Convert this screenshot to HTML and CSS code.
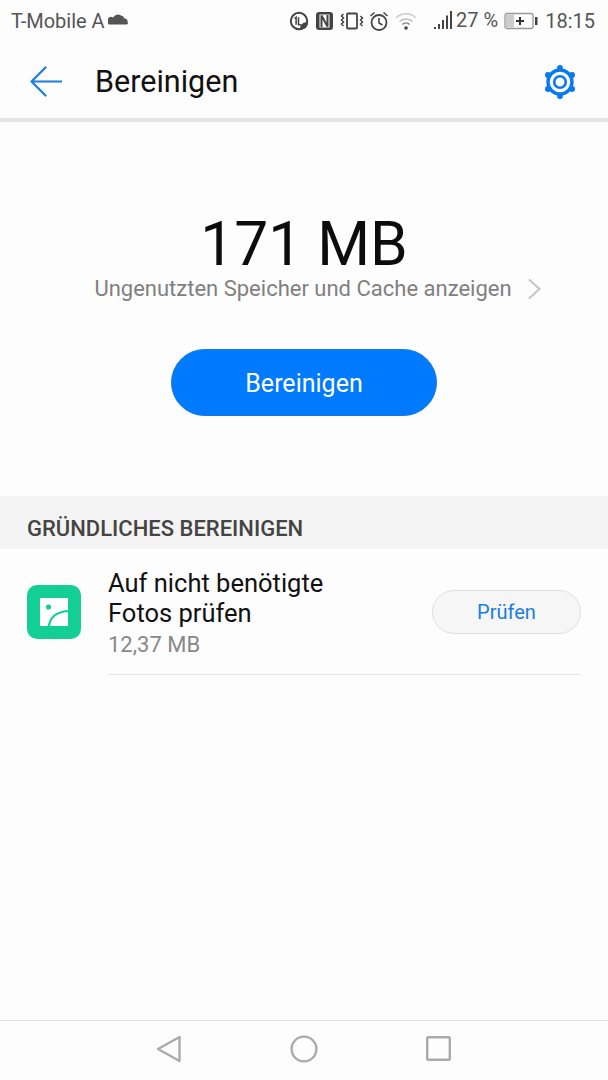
FILE: index.html
```html
<!DOCTYPE html>
<html lang="de">
<head>
    <meta charset="UTF-8">
    <meta name="viewport" content="width=device-width, initial-scale=1.0">
    <title>Bereinigen</title>
    <link rel="stylesheet" href="styles.css">
</head>
<body>
    <div class="screen">
        <div class="status-bar">
            <div class="status-left">
                <span>T-Mobile A</span>
                <svg class="cloud" width="20" height="12" viewBox="0 0 20 12"><path d="M1 11.500h17.500a1.500 1.500 0 0 0 1-2.600 3 3 0 0 0-3-3.300A4.500 4.500 0 0 0 13 2.600 5 5 0 0 0 5.200 4.600 3.600 3.600 0 0 0 1 11.500z" fill="#555"/></svg>
            </div>
            <div class="status-right">
                <svg width="20" height="20" viewBox="0 0 20 20" class="st-data"><circle cx="10" cy="10" r="8.200" fill="none" stroke="#444" stroke-width="2"/><path d="M5.500 7.500l1.600-1.200v7.400M9.500 6.300v7.400h3" fill="none" stroke="#444" stroke-width="1.500"/><path d="M11 18.500c0-5 3-7.500 8-7.500 0 5-3 7.500-8 7.500z" fill="#444"/></svg>
                <svg width="19" height="20" viewBox="0 0 19 20" class="st-nfc"><rect x="1" y="1" width="17" height="18" rx="3" fill="#444"/><rect x="4.500" y="3.500" width="10" height="13" fill="#fdfdfd"/><path d="M6.500 16V4.500l6 11V4" fill="none" stroke="#444" stroke-width="2"/></svg>
                <svg width="24" height="20" viewBox="0 0 24 20" class="st-vib"><rect x="7" y="2.500" width="10" height="15" rx="1" fill="none" stroke="#444" stroke-width="1.800"/><path d="M3.500 3l-2 2 2 2-2 2 2 2-2 2 2 2M20.500 5l2 2-2 2 2 2-2 2 2 2" fill="none" stroke="#444" stroke-width="1.500"/></svg>
                <svg width="20" height="21" viewBox="0 0 20 21" class="st-alarm"><circle cx="10" cy="11.500" r="7.500" fill="none" stroke="#444" stroke-width="1.800"/><path d="M10 7v5l3.500 2M1.500 5l4-3.500M18.500 5l-4-3.500" fill="none" stroke="#444" stroke-width="1.600"/></svg>
                <svg width="22" height="18" viewBox="0 0 22 18" class="st-wifi"><path d="M1 6a14 14 0 0 1 20 0" fill="none" stroke="#ccc" stroke-width="1.500"/><path d="M4.500 9.500a9.500 9.500 0 0 1 13 0" fill="none" stroke="#bbb" stroke-width="1.500"/><path d="M7.500 12.500a5 5 0 0 1 7 0" fill="none" stroke="#777" stroke-width="1.500"/><circle cx="11" cy="16" r="1.800" fill="#444"/></svg>
                <svg width="20" height="20" viewBox="0 0 20 20" class="st-signal"><path d="M1 17h2v2H1zM5 14h2v5H5zM9 10h2v9H9zM13 5.500h2V19h-2zM17 1h2v18h-2z" fill="#444"/></svg>
                <span class="st-percent">27 %</span>
                <svg width="34" height="18" viewBox="0 0 34 18" class="st-battery"><rect x="1" y="1.500" width="28" height="15" rx="2" fill="none" stroke="#999" stroke-width="1.300"/><rect x="2" y="2.500" width="8" height="13" fill="#ccc"/><path d="M16 5v8M12 9h8" stroke="#333" stroke-width="2"/><rect x="31" y="5" width="2.500" height="8" fill="#444"/></svg>
                <span class="st-time">18:15</span>
            </div>
        </div>

        <div class="header">
            <svg class="back" width="32" height="32" viewBox="0 0 32 32"><path d="M15.500 1.500L1.500 15.500l14 14M1.500 15.500h30" fill="none" stroke="#1a7de0" stroke-width="2.200" stroke-linecap="round" stroke-linejoin="round"/></svg>
            <h1>Bereinigen</h1>
            <svg class="gear" width="34" height="34" viewBox="0 0 34 34">
                <g fill="#0a78ee">
                    <circle cx="17" cy="3" r="2.900"/><circle cx="17" cy="31" r="2.900"/>
                    <circle cx="4.900" cy="10" r="2.900"/><circle cx="29.100" cy="10" r="2.900"/>
                    <circle cx="4.900" cy="24" r="2.900"/><circle cx="29.100" cy="24" r="2.900"/>
                </g>
                <circle cx="17" cy="17" r="12" fill="#fdfdfd" stroke="#0a78ee" stroke-width="3.400"/>
                <circle cx="17" cy="17" r="5.800" fill="none" stroke="#0a78ee" stroke-width="2.600"/>
            </svg>
        </div>

        <div class="summary">
            <div class="size">171 MB</div>
            <div class="details">
                <span>Ungenutzten Speicher und Cache anzeigen</span>
                <svg width="14" height="22" viewBox="0 0 14 22"><path d="M2 1.500l10.500 9.500L2 20.500" fill="none" stroke="#c4c4c4" stroke-width="2"/></svg>
            </div>
            <button class="clean-btn">Bereinigen</button>
        </div>

        <div class="section-title">GRÜNDLICHES BEREINIGEN</div>

        <div class="row">
            <div class="row-icon">
                <svg width="28" height="28" viewBox="0 0 28 28">
                    <rect width="28" height="28" fill="#fff"/>
                    <circle cx="8.500" cy="9" r="2.600" fill="#14cf95"/>
                    <path d="M9 28C10 19 17 14 28 13" fill="none" stroke="#14cf95" stroke-width="2.200"/>
                </svg>
            </div>
            <div class="row-body">
                <div class="row-text">
                    <div class="row-title">Auf nicht benötigte<br>Fotos prüfen</div>
                    <div class="row-size">12,37 MB</div>
                </div>
                <button class="check-btn">Prüfen</button>
            </div>
        </div>

        <div class="spacer"></div>

        <div class="nav-bar">
            <svg width="26" height="28" viewBox="0 0 26 28"><path d="M23.500 2L2 14l21.500 12z" fill="none" stroke="#aaa" stroke-width="2.400" stroke-linejoin="round"/></svg>
            <svg width="28" height="28" viewBox="0 0 28 28"><circle cx="14" cy="14" r="12.400" fill="none" stroke="#aaa" stroke-width="2.400"/></svg>
            <svg width="25" height="25" viewBox="0 0 25 25"><rect x="1.200" y="1.200" width="22.600" height="22.600" rx="1" fill="none" stroke="#aaa" stroke-width="2.400"/></svg>
        </div>
    </div>
</body>
</html>
```

FILE: styles.css
```css
body {
    margin: 0;
    padding: 0;
    font-family: Roboto, "Noto Sans", sans-serif;
    background-color: #fdfdfd;
}
.screen {
    width: 608px;
    height: 1080px;
    display: flex;
    flex-direction: column;
    overflow: hidden;
}
.status-bar {
    height: 42px;
    display: flex;
    justify-content: space-between;
    align-items: center;
    padding: 0 13px 0 11px;
    font-size: 20px;
    color: #555;
}
.status-left, .status-right {
    display: flex;
    align-items: center;
}
.cloud {
    margin-left: 3px;
    margin-top: -4px;
}
.st-nfc { margin-left: 6px; }
.st-vib { margin-left: 6px; }
.st-alarm { margin-left: 5px; }
.st-wifi { margin-left: 6px; }
.st-signal { margin-left: 16px; margin-top: -2px; }
.st-percent { margin-left: 3px; margin-top: -3px; }
.st-battery { margin-left: 6px; }
.st-time { margin-left: 7px; }
.header {
    height: 76px;
    display: flex;
    align-items: center;
    padding: 0 30px;
    border-bottom: 4px solid #e6e6e6;
}
.back {
    flex: none;
    margin-top: 3px;
}
.header h1 {
    margin: 3px 0 0 33px;
    flex: 1;
    font-size: 30.5px;
    font-weight: 400;
    color: #111;
}
.gear {
    margin-right: 1px;
    margin-top: 3px;
}
.summary {
    height: 374px;
    display: flex;
    flex-direction: column;
    align-items: center;
    box-sizing: border-box;
    padding-top: 93px;
}
.size {
    font-size: 60.5px;
    line-height: 60px;
    color: #0c0c0c;
}
.details {
    display: flex;
    align-items: center;
    gap: 15px;
    margin-left: 27px;
    font-size: 22px;
    line-height: 28px;
    color: #808080;
}
.clean-btn {
    width: 266px;
    height: 67px;
    margin-top: 46px;
    padding: 2px 0 0;
    border: 1px solid #1a78dd;
    border-radius: 34px;
    background-color: #007aff;
    color: #fff;
    font-family: inherit;
    font-size: 25px;
}
.section-title {
    height: 53px;
    box-sizing: border-box;
    padding: 21px 0 0 27px;
    background-color: #f4f4f4;
    font-size: 22px;
    line-height: 24px;
    font-weight: 500;
    color: #444;
}
.row {
    display: flex;
    padding: 0 27px;
}
.row-icon {
    width: 54px;
    height: 54px;
    flex: none;
    margin-top: 36px;
    border-radius: 10px;
    background-color: #14cf95;
    display: flex;
    align-items: center;
    justify-content: center;
}
.row-body {
    flex: 1;
    margin-left: 27px;
    height: 126px;
    box-sizing: border-box;
    padding-top: 19px;
    display: flex;
    justify-content: space-between;
    border-bottom: 1px solid #e4e4e4;
}
.row-title {
    font-size: 25.5px;
    line-height: 30px;
    color: #111;
}
.row-size {
    margin-top: 3px;
    font-size: 22px;
    line-height: 28px;
    color: #888;
}
.check-btn {
    width: 149px;
    height: 44px;
    margin-top: 22px;
    border: 1px solid #e0e0e0;
    border-radius: 22px;
    background-color: #f6f6f6;
    color: #1a7de0;
    font-family: inherit;
    font-size: 20px;
}
.spacer {
    flex: 1;
}
.nav-bar {
    height: 60px;
    box-sizing: border-box;
    padding: 0 157px 4px 156px;
    border-top: 1px solid #e4e4e4;
    display: flex;
    align-items: center;
    justify-content: space-between;
}
```
